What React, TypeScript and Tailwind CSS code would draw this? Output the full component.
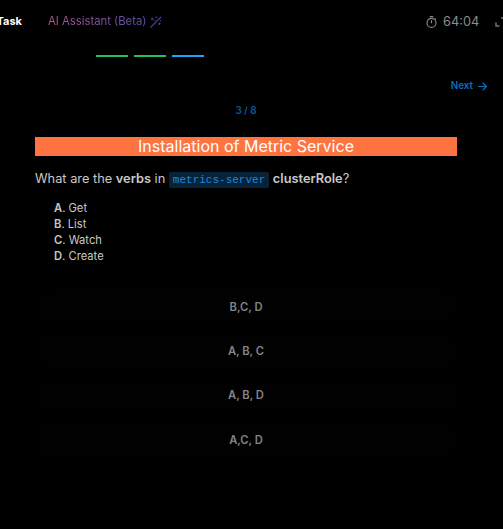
import React from "react";

const progress = ["bg-[#22c05e]", "bg-[#22c05e]", "bg-[#1ba4fb]"];

const options = [
  { letter: "A", label: "Get" },
  { letter: "B", label: "List" },
  { letter: "C", label: "Watch" },
  { letter: "D", label: "Create" },
];

const answers = ["B,C, D", "A, B, C", "A, B, D", "A,C, D"];

function WandIcon() {
  return (
    <svg className="ml-[4px] h-3 w-3 shrink-0" viewBox="0 0 12 12" fill="none" stroke="#4b47a3" strokeLinecap="round">
      <path d="M0.8 11.2 10.8 1.2" strokeWidth="1.2" />
      <path d="M1.2 3h2M2.2 2v2M5.6 1.2h1.6M8.6 7.8h1.6M9.4 7v1.6M4.4 4.8h.6M10.4 4.7h.4" strokeWidth="0.9" />
    </svg>
  );
}

function TimerIcon() {
  return (
    <svg className="h-3 w-[11px] shrink-0" viewBox="0 0 11 12" fill="none" stroke="#8b8b8b" strokeWidth="1.1">
      <circle cx="5.5" cy="6.9" r="4.5" />
      <path d="M3.7.6h3.6M5.5 4.2v3M9 2.4l.9.9" />
    </svg>
  );
}

function ArrowIcon() {
  return (
    <svg className="ml-[5px] h-[9px] w-[9px]" viewBox="0 0 9 9" fill="none" stroke="#0a74c4" strokeWidth="1.1" strokeLinecap="round" strokeLinejoin="round">
      <path d="M.6 4.5h7.8M5 1l3.4 3.5L5 8" />
    </svg>
  );
}

function ExpandIcon() {
  return (
    <svg className="ml-[15px] h-[10px] w-2 shrink-0" viewBox="0 0 8 10" fill="none" stroke="#77777c" strokeWidth="1.4">
      <path d="M1 5.5V9H4.5M6 1H9" />
    </svg>
  );
}

export default function App() {
  return (
    <div className="h-[529px] w-[503px] overflow-hidden bg-black font-['Inter',sans-serif] text-[#c8c8c8]">
      <header className="flex h-[43px] items-center">
        <div className="flex w-[22px] justify-end text-[11px] font-bold whitespace-nowrap text-white">Task</div>
        <div className="ml-[26px] flex items-center">
          <span className="bg-gradient-to-r from-[#b4549b] to-[#5650ac] bg-clip-text text-[11.3px] whitespace-nowrap text-transparent">
            AI Assistant (Beta)
          </span>
          <WandIcon />
        </div>
        <div className="ml-auto flex items-center text-[#8b8b8b]">
          <TimerIcon />
          <span className="ml-[6px] w-[37px] text-[12.8px] whitespace-nowrap">64:04</span>
          <ExpandIcon />
        </div>
      </header>

      <div className="mt-[12px] ml-24 flex gap-[6px]">
        {progress.map((color, i) => (
          <div key={i} className={`h-[2px] w-8 ${color}`} />
        ))}
      </div>

      <div className="mt-[21px] flex h-4 items-center justify-end pr-4 text-[9.8px] font-semibold text-[#0a6fbe]">
        Next
        <ArrowIcon />
      </div>

      <main className="mr-[46px] ml-[35px]">
        <div className="mt-[9px] text-center text-[9.8px] leading-4 font-semibold text-[#0a5a9a]">3 / 8</div>
        <h1 className="mt-[18px] h-[19px] bg-[#ff7340] text-center text-[16px] leading-[19px] font-normal text-white">
          Installation of Metric Service
        </h1>
        <p className="mt-[14px] h-[18px] text-[12.8px] leading-[18px] whitespace-nowrap">
          What are the <strong className="font-semibold">verbs</strong> in{" "}
          <code className="rounded-[2px] bg-[#082338] px-1 py-[2px] font-['Liberation_Mono',monospace] text-[11px] text-[#168be0]">
            metrics-server
          </code>{" "}
          <strong className="font-semibold">clusterRole</strong>?
        </p>
        <ul className="mt-[12px] ml-[19px] text-[11.2px] leading-4">
          {options.map((o) => (
            <li key={o.letter}>
              <strong className="font-semibold">{o.letter}</strong>. {o.label}
            </li>
          ))}
        </ul>
        <div className="mt-[26px] flex flex-col gap-[10.35px]">
          {answers.map((a) => (
            <button key={a} className="h-[34px] w-full rounded-full bg-[#010101] text-[11.2px] font-semibold text-[#858585]">
              {a}
            </button>
          ))}
        </div>
      </main>
    </div>
  );
}
